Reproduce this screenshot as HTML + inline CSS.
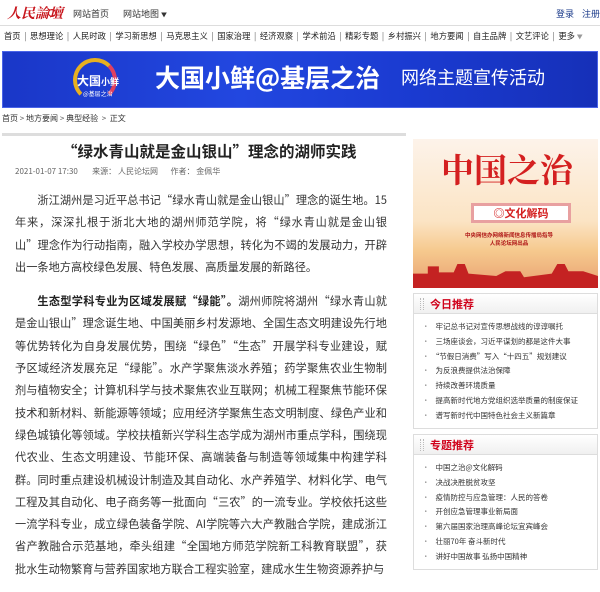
<!DOCTYPE html>
<html><head><meta charset="utf-8"><style>
*{margin:0;padding:0;box-sizing:border-box}
body{width:600px;height:570px;overflow:hidden;background:#fff;font-family:"Noto Sans CJK SC","Liberation Sans",sans-serif;color:#333;position:relative}
.a{position:absolute;white-space:nowrap}
.top{position:absolute;left:0;top:0;width:600px;height:26px;background:#fff;border-bottom:1px solid #ddd}
.nav{font-size:8.3px;color:#222}
.nav span.s{color:#666;margin:0 3.6px}
.banner{position:absolute;left:2px;top:51px;width:596px;height:57px;background:linear-gradient(90deg,#1a37c8,#2247e0 40%,#1a3ad0 70%,#1630b8);border:1px solid #4a64e8;overflow:hidden}
.body{position:absolute;left:15px;top:189px;width:372px;font-size:11.2px;line-height:22.3px;color:#333;text-align:justify}
.body p{text-indent:2em;margin-bottom:12px}
.box{position:absolute;left:413px;width:185px;border:1px solid #ddd;background:#fff}
.box .h{height:20px;background:linear-gradient(#fff,#f0f0f0);border-bottom:1px solid #ddd;color:#d0021b;font-size:11px;font-weight:bold;line-height:20px;padding-left:16px;position:relative}
.box .h:before{content:"";position:absolute;left:6px;top:4px;width:2px;height:12px;border-left:1px dotted #bbb;border-right:1px dotted #bbb}
.box ul{list-style:none;padding:6px 0 0 8px;font-size:7.5px;line-height:14.8px;color:#333}
.box li:before{content:"·";color:#999;margin-right:6px}
</style></head><body>
<div class="top"></div>
<div class="a" style="left:7px;top:3px;font-size:14px;font-weight:bold;font-style:italic;color:#c8161d;font-family:'Noto Serif CJK SC',serif">人民論壇</div>
<div class="a" style="left:48px;top:9px;width:8px;height:8px;border:1px solid #c8161d;border-radius:50%"></div>
<div class="a" style="left:73px;top:7px;font-size:9px;color:#333">网站首页</div>
<div class="a" style="left:100px;top:6px;font-size:9px;color:#ccc">|</div>
<div class="a" style="left:123px;top:7px;font-size:9px;color:#333">网站地图 <span style="font-size:6px">▼</span></div>
<div class="a" style="left:556px;top:7px;font-size:9px;color:#1a3a8a">登录</div>
<div class="a" style="left:582px;top:7px;font-size:9px;color:#1a3a8a">注册</div>
<div class="a nav" style="left:4px;top:30px">首页<span class="s">|</span>思想理论<span class="s">|</span>人民时政<span class="s">|</span>学习新思想<span class="s">|</span>马克思主义<span class="s">|</span>国家治理<span class="s">|</span>经济观察<span class="s">|</span>学术前沿<span class="s">|</span>精彩专题<span class="s">|</span>乡村振兴<span class="s">|</span>地方要闻<span class="s">|</span>自主品牌<span class="s">|</span>文艺评论<span class="s">|</span>更多 <span style="color:#999;font-size:6px">▼</span></div>
<div class="banner">
 <div class="a" style="left:70px;top:6px;width:44px;height:44px;border-radius:50%;border:4px solid #e8b020;border-right-color:#e04060;border-bottom-color:transparent"></div>
 <div class="a" style="left:74px;top:20px;font-size:12px;font-weight:bold;color:#fff">大国<span style="font-size:9px">小鲜</span></div>
 <div class="a" style="left:80px;top:37px;font-size:6px;color:#fff">@基层之治</div>
 <div class="a" style="left:152px;top:7px;font-size:25px;font-weight:bold;color:#fff">大国小鲜@基层之治</div>
 <div class="a" style="left:398px;top:12px;font-size:18px;color:#fff">网络主题宣传活动</div>
</div>
<div class="a" style="left:2px;top:113px;font-size:8px;color:#333">首页 <span style="color:#666">&gt;</span> 地方要闻 <span style="color:#666">&gt;</span> 典型经验 &nbsp;<span style="color:#666">&gt;</span> &nbsp;正文</div>
<div class="a" style="left:2px;top:133px;width:404px;height:3px;background:#ddd"></div>
<div class="a" style="left:62px;top:140px;font-size:15.5px;font-weight:bold;color:#222">“绿水青山就是金山银山”理念的湖师实践</div>
<div class="a" style="left:15px;top:166px;font-size:8px;color:#666">2021-01-07 17:30 &nbsp;&nbsp;&nbsp;&nbsp;&nbsp;&nbsp; 来源： 人民论坛网 &nbsp;&nbsp;&nbsp;&nbsp;&nbsp; 作者： 金佩华</div>
<div class="body">
<p>浙江湖州是习近平总书记“绿水青山就是金山银山”理念的诞生地。15年来，深深扎根于浙北大地的湖州师范学院，将“绿水青山就是金山银山”理念作为行动指南，融入学校办学思想，转化为不竭的发展动力，开辟出一条地方高校绿色发展、特色发展、高质量发展的新路径。</p>
<p><b style="color:#222">生态型学科专业为区域发展赋“绿能”。</b>湖州师院将湖州“绿水青山就是金山银山”理念诞生地、中国美丽乡村发源地、全国生态文明建设先行地等优势转化为自身发展优势，围绕“绿色”“生态”开展学科专业建设，赋予区域经济发展充足“绿能”。水产学聚焦淡水养殖；药学聚焦农业生物制剂与植物安全；计算机科学与技术聚焦农业互联网；机械工程聚焦节能环保技术和新材料、新能源等领域；应用经济学聚焦生态文明制度、绿色产业和绿色城镇化等领域。学校扶植新兴学科生态学成为湖州市重点学科，围绕现代农业、生态文明建设、节能环保、高端装备与制造等领域集中构建学科群。同时重点建设机械设计制造及其自动化、水产养殖学、材料化学、电气工程及其自动化、电子商务等一批面向“三农”的一流专业。学校依托这些一流学科专业，成立绿色装备学院、AI学院等六大产教融合学院，建成浙江省产教融合示范基地，牵头组建“全国地方师范学院新工科教育联盟”，获批水生动物繁育与营养国家地方联合工程实验室，建成水生生物资源养护与</p>
</div>
<div class="a" style="left:413px;top:139px;width:185px;height:149px;background:linear-gradient(#fdf3ea,#fbe4c4 55%,#f6c98e 75%,#e8a070);overflow:hidden">
 <div class="a" style="left:28px;top:6px;font-size:33px;font-weight:bold;color:#d42020;font-family:'Noto Serif CJK SC',serif">中国之治</div>
 <div class="a" style="left:58px;top:64px;width:100px;height:20px;background:#fff;border:3px solid #e8a0a0;font-size:11px;font-weight:bold;color:#d42020;text-align:center;line-height:14px">◎文化解码</div>
 <div class="a" style="left:52px;top:92px;font-size:5.5px;font-weight:bold;color:#b01818;text-align:center;line-height:8px">中央网信办网络新闻信息传播局指导<br>人民论坛网出品</div>
 <div class="a" style="left:0;top:125px;width:185px;height:24px;background:#c42222;clip-path:polygon(0 40%,8% 40%,8% 10%,14% 10%,14% 35%,22% 35%,24% 0,28% 0,30% 40%,45% 50%,50% 30%,58% 30%,60% 55%,75% 40%,78% 0,82% 0,84% 30%,92% 30%,100% 50%,100% 100%,0 100%)"></div>
</div>
<div class="box" style="top:293px;height:136px"><div class="h">今日推荐</div><ul>
<li>牢记总书记对宣传思想战线的谆谆嘱托</li><li>三场座谈会，习近平谋划的都是这件大事</li><li>“节假日消费”写入“十四五”规划建议</li><li>为反浪费提供法治保障</li><li>持续改善环境质量</li><li>提高新时代地方党组织选举质量的制度保证</li><li>谱写新时代中国特色社会主义新篇章</li></ul></div>
<div class="box" style="top:434px;height:136px"><div class="h">专题推荐</div><ul>
<li>中国之治@文化解码</li><li>决战决胜脱贫攻坚</li><li>疫情防控与应急管理：人民的答卷</li><li>开创应急管理事业新局面</li><li>第六届国家治理高峰论坛宜宾峰会</li><li>壮丽70年 奋斗新时代</li><li>讲好中国故事 弘扬中国精神</li></ul></div>
</body></html>
